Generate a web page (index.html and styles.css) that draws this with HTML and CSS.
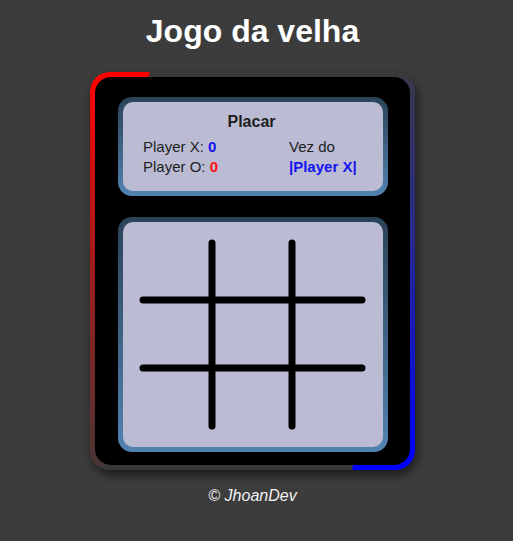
FILE: index.html
```html
<!DOCTYPE html>
<html lang="pt">
<head>
<meta charset="utf-8">
<title>Jogo da velha</title>
<link rel="stylesheet" href="styles.css">
</head>
<body>
<div class="page">
  <h1 class="title">Jogo da velha</h1>
  <div class="frame">
    <div class="game">
      <div class="panel">
        <div class="panel-inner score">
          <div class="score-title">Placar</div>
          <div class="score-cols">
            <div class="col">
              <div>Player X: <b class="blue">0</b></div>
              <div>Player O: <b class="red">0</b></div>
            </div>
            <div class="col">
              <div>Vez do</div>
              <div><b class="blue">|Player X|</b></div>
            </div>
          </div>
        </div>
      </div>
      <div class="panel board-panel">
        <div class="panel-inner board">
          <svg class="grid" width="260" height="225" viewBox="0 0 260 225">
            <g stroke="#000" stroke-width="7" stroke-linecap="round">
              <line x1="89" y1="21" x2="89" y2="204"/>
              <line x1="169" y1="21" x2="169" y2="204"/>
              <line x1="20" y1="78" x2="239" y2="78"/>
              <line x1="20" y1="146" x2="239" y2="146"/>
            </g>
          </svg>
        </div>
      </div>
    </div>
  </div>
  <p class="footer">© JhoanDev</p>
</div>
</body>
</html>
```
FILE: styles.css
```css
html, body {
  margin: 0;
  padding: 0;
  background: #3c3c3c;
  font-family: "Liberation Sans", Arial, sans-serif;
}
.page {
  width: 505px;
  display: flex;
  flex-direction: column;
  align-items: center;
  padding-top: 13px;
}
.title {
  margin: 0;
  color: #fff;
  font-size: 32px;
  font-weight: bold;
  line-height: 36px;
}
.frame {
  margin-top: 23px;
  width: 325px;
  height: 398px;
  box-sizing: border-box;
  padding: 5px;
  border-radius: 20px;
  box-shadow: 2px 5px 10px rgba(0,0,0,0.55);
  background:
    linear-gradient(104deg, #ff0000 57px, transparent 59px) left top / 64px 5px no-repeat,
    linear-gradient(104deg, transparent 3px, #0000ff 5px) right bottom / 66px 5px no-repeat,
    linear-gradient(#3a3a3a, #3a3a3a) left top / 100% 5px no-repeat,
    linear-gradient(#383838, #383838) left bottom / 100% 5px no-repeat,
    linear-gradient(to bottom, #ff0000 0%, #b01818 40%, #4a3535 100%) left top / 50% 100% no-repeat,
    linear-gradient(to bottom, #38384a 0%, #2a2a8a 40%, #0000ff 100%) right top / 50% 100% no-repeat;
}
.game {
  height: 100%;
  background: #000;
  border-radius: 16px;
  box-sizing: border-box;
  padding: 20px 22px 13px 23px;
  display: flex;
  flex-direction: column;
  gap: 21px;
}
.panel {
  padding: 5px;
  border-radius: 14px;
  background: linear-gradient(to bottom, #2a4258, #5283b0);
  height: 99px;
  box-sizing: border-box;
}
.board-panel {
  height: 235px;
}
.panel-inner {
  height: 100%;
  background: #bbbbd4;
  border-radius: 10px;
}
.score {
  box-sizing: border-box;
  padding: 11px 25px 0 20px;
  color: #1e1e1e;
  font-size: 15px;
}
.score-title {
  text-align: center;
  font-weight: bold;
  font-size: 16px;
  line-height: 18px;
  margin-left: 2px;
}
.score-cols {
  margin-top: 6px;
  display: flex;
  justify-content: space-between;
  line-height: 20px;
}
.col:last-child {
  width: 69px;
}
.blue { color: #1414f0; }
.red { color: #ff1010; }
.board {
  display: flex;
}
.grid {
  display: block;
}
.footer {
  margin: 17px 0 0;
  color: #f2f2f2;
  font-style: italic;
  font-size: 16px;
  line-height: 18px;
}
```
